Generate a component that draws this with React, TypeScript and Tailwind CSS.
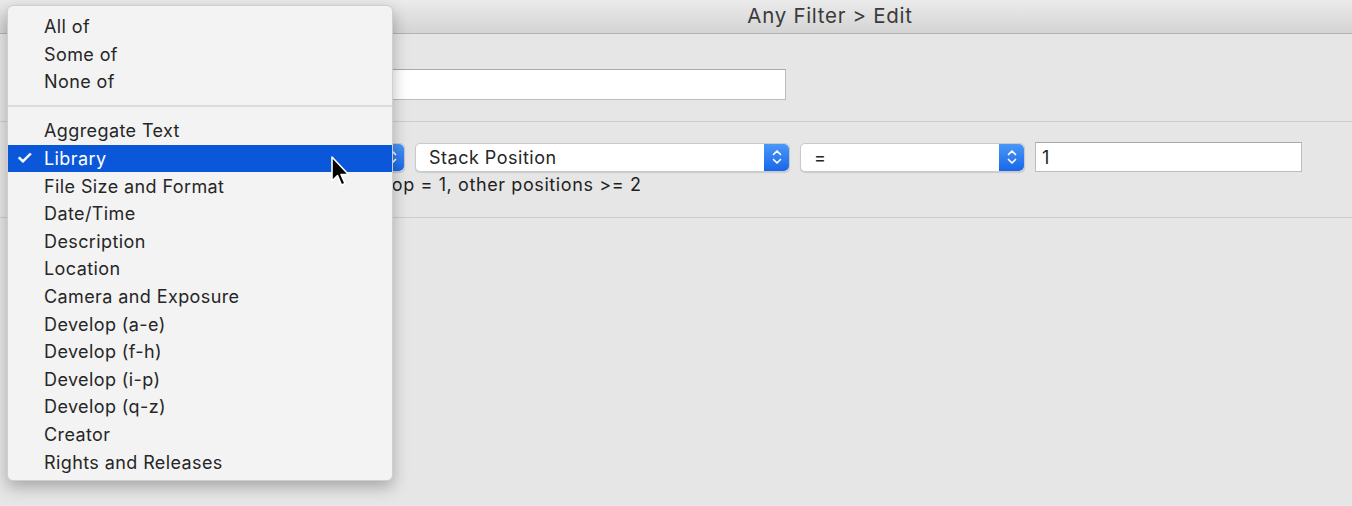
import React from "react";

const font = { fontFamily: "Inter, 'Noto Sans', sans-serif" };

const groups = ["All of", "Some of", "None of"];
const sections = [
  "Aggregate Text",
  "Library",
  "File Size and Format",
  "Date/Time",
  "Description",
  "Location",
  "Camera and Exposure",
  "Develop (a-e)",
  "Develop (f-h)",
  "Develop (i-p)",
  "Develop (q-z)",
  "Creator",
  "Rights and Releases",
];

function Stepper() {
  return (
    <div className="w-[25px] h-full rounded-r-[5px] bg-gradient-to-b from-[#4a97f7] to-[#1766e8] flex items-center justify-center">
      <svg width="12" height="20" viewBox="0 0 12 20" fill="none" stroke="white" strokeWidth="1.7" strokeLinecap="round" strokeLinejoin="round">
        <path d="M2.5 7.5 L6 4 L9.5 7.5" />
        <path d="M2.5 12.5 L6 16 L9.5 12.5" />
      </svg>
    </div>
  );
}

function Popup({ label, width }: { label: string; width: string }) {
  return (
    <div className={`${width} h-[29px] flex bg-white rounded-[5px] border border-[#c9c9c9] shadow-[0_1px_1px_rgba(0,0,0,0.12)]`}>
      <div className="flex-1 flex items-center pl-[13px] text-[18px] tracking-[0.5px] text-[#262626]">{label}</div>
      <Stepper />
    </div>
  );
}

function Cursor() {
  return (
    <svg className="absolute left-[330px] top-[155px]" width="22" height="34" viewBox="0 0 22 34">
      <path d="M2 2 L2 26 L7.5 20.5 L11.5 30 L15 28.5 L11 19.5 L18.5 19.5 Z" fill="black" stroke="white" strokeWidth="1.6" strokeLinejoin="round" />
    </svg>
  );
}

export default function App() {
  return (
    <div className="relative w-[1352px] h-[506px] overflow-hidden bg-[#e6e6e6]" style={font}>
      {/* title bar */}
      <div className="h-[34px] bg-gradient-to-b from-[#ebebeb] to-[#d4d4d4] border-b border-[#b3b3b3] flex items-center justify-center pl-[308px]">
        <span className="text-[20.5px] tracking-[0.7px] text-[#3b3b3b]">Any Filter &gt; Edit</span>
      </div>

      {/* name row */}
      <div className="pt-[35px] pb-[21px] pl-[180px] border-b border-[#cdcdcd]">
        <div className="w-[606px] h-[31px] bg-white border border-[#bdbdbd] border-t-[#a9a9a9]" />
      </div>

      {/* criteria row */}
      <div className="pt-[20px] pb-[20px] border-b border-[#cdcdcd]">
        <div className="flex items-center pl-[180px] gap-[10px]">
          <Popup label="Library" width="w-[225px]" />
          <Popup label="Stack Position" width="w-[375px]" />
          <Popup label="=" width="w-[225px]" />
          <div className="w-[267px] h-[30px] bg-white border border-[#bdbdbd] border-t-[#a9a9a9] flex items-center pl-[6px] text-[18px] text-[#1f1f1f]">
            1
          </div>
        </div>
        <div className="pl-[381px] pt-[1px] text-[18px] tracking-[0.6px] leading-[24px] text-[#1f1f1f]">Top = 1, other positions &gt;= 2</div>
      </div>

      {/* dropdown menu */}
      <div className="absolute left-[7px] top-[5px] w-[386px] h-[476px] rounded-[6px] bg-[#f3f3f3] border border-[#cfcfcf] shadow-[0_6px_16px_rgba(0,0,0,0.28)] pt-[7px] text-[18px] tracking-[0.4px] text-[#262626]">
        {groups.map((g) => (
          <div key={g} className="h-[27.6px] flex items-center pl-[36px]">
            {g}
          </div>
        ))}
        <div className="h-[21.4px] flex items-center">
          <div className="w-full h-[2px] bg-[#dcdcdc]" />
        </div>
        {sections.map((s) => {
          const on = s === "Library";
          return (
            <div
              key={s}
              className={`h-[27.6px] flex items-center ${on ? "bg-[#0b57d9] text-white" : ""}`}
            >
              <span className="w-[36px] pl-[8px] text-[19px] font-semibold">{on ? "✓" : ""}</span>
              {s}
            </div>
          );
        })}
      </div>

      <Cursor />
    </div>
  );
}
